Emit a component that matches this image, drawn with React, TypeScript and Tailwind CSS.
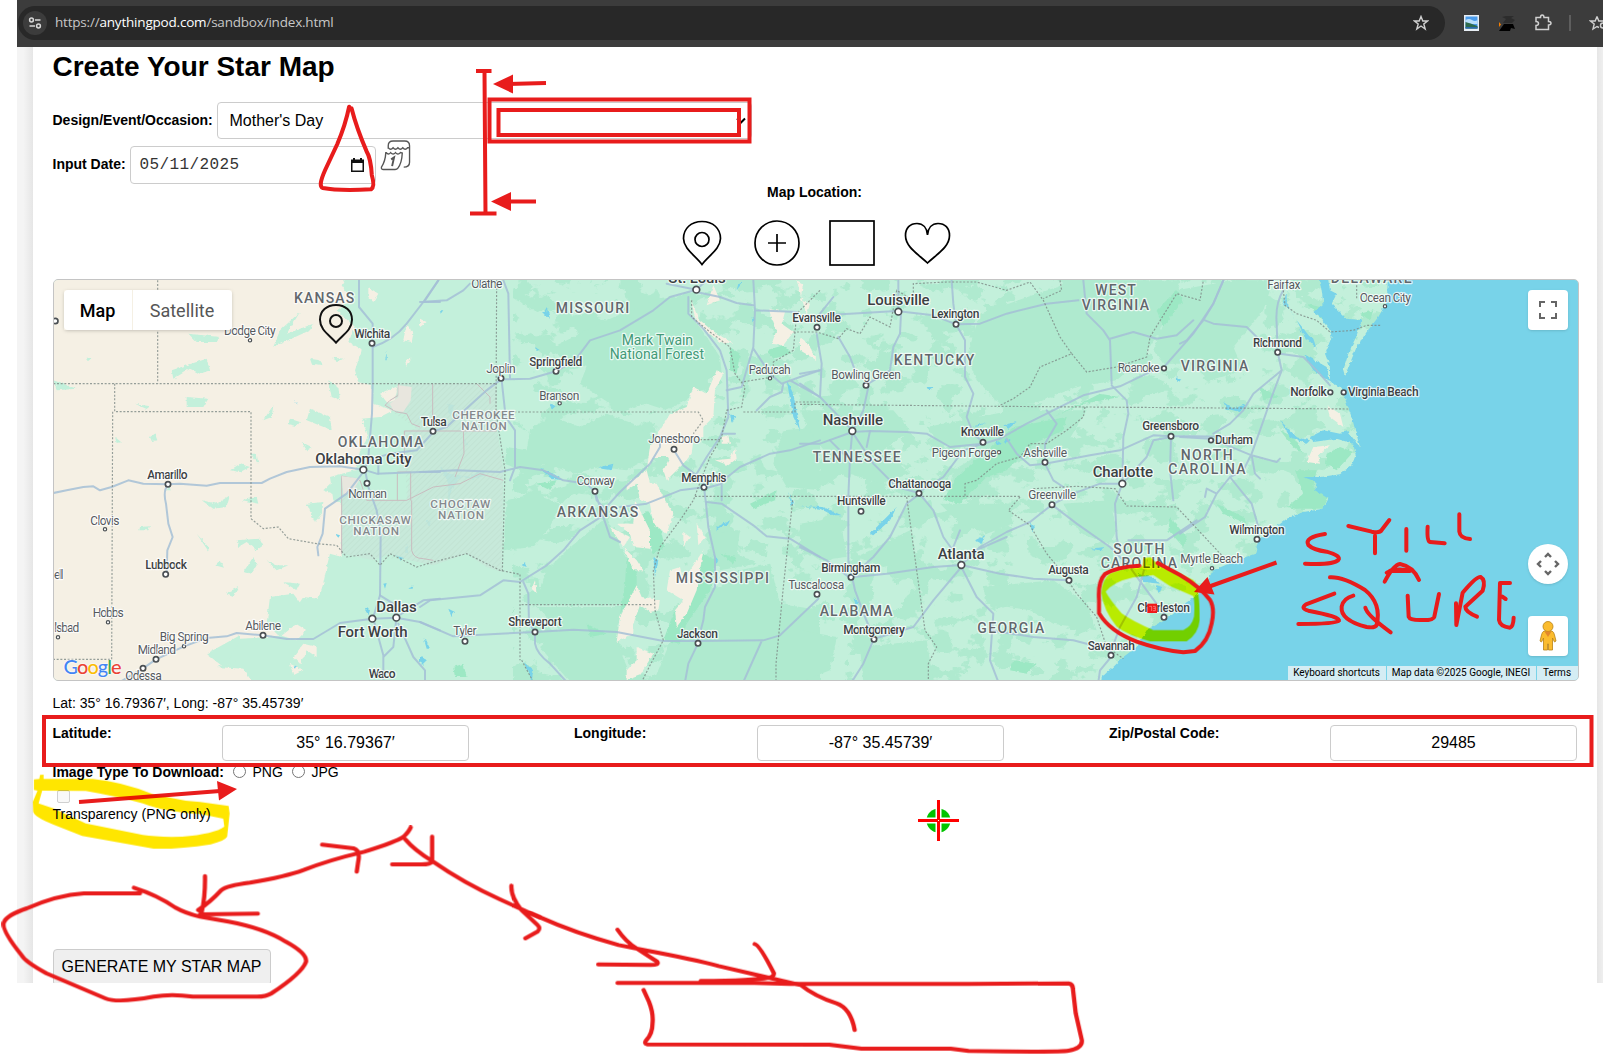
import React from "react";

type Kind = "state" | "nation" | "metro" | "city" | "town" | "park";
type Label = [string, number, number, number, Kind];

const labelStyle: Record<Kind, { size: number; weight: number; fill: string }> = {
  state: { size: 42, weight: 500, fill: "#62676c" },
  nation: { size: 35, weight: 500, fill: "#85898d" },
  metro: { size: 45, weight: 500, fill: "#3c4043" },
  city: { size: 36, weight: 500, fill: "#3c4043" },
  town: { size: 36, weight: 400, fill: "#55595e" },
  park: { size: 42, weight: 400, fill: "#439a78" },
};

type Sheet = { x: number; labels: Label[]; dots: [number, number, number][] };

const sheets: Sheet[] = [
  {
    x: 0,
    labels: [
      ["KANSAS", 762, 943, 97, "state"],
      ["Dodge City", 552, 707, 195, "town"],
      ["Wichita", 943, 1051, 204, "city"],
      ["OKLAHOMA", 893, 1150, 531, "state"],
      ["Oklahoma City", 826, 1115, 580, "metro"],
      ["Amarillo", 322, 443, 627, "city"],
      ["Norman", 925, 1041, 682, "town"],
      ["CHICKASAW", 898, 1112, 762, "nation"],
      ["NATION", 940, 1077, 795, "nation"],
      ["Clovis", 151, 238, 763, "town"],
      ["Lubbock", 316, 441, 897, "city"],
      ["ell", 42, 70, 927, "town"],
      ["Hobbs", 158, 251, 1041, "town"],
      ["lsbad", 43, 118, 1086, "town"],
      ["Dallas", 1009, 1130, 1024, "metro"],
      ["Fort Worth", 893, 1103, 1100, "metro"],
      ["Abilene", 616, 723, 1080, "town"],
      ["Big Spring", 359, 506, 1113, "town"],
      ["Midland", 293, 408, 1152, "town"],
      ["Odessa", 256, 365, 1230, "town"],
      ["Waco", 986, 1067, 1223, "city"],
    ],
    dots: [
      [46, 152, 8], [630, 210, 5], [996, 219, 8], [970, 598, 10], [981, 639, 8], [384, 642, 8],
      [195, 777, 5], [377, 912, 8], [204, 1056, 5], [54, 1101, 5], [997, 1045, 10], [1069, 1042, 10],
      [669, 1095, 8], [432, 1128, 5], [348, 1167, 8], [309, 1194, 8],
    ],
  },
  {
    x: 1140,
    labels: [
      ["Olathe", 154, 247, 54, "town"],
      ["MISSOURI", 407, 628, 129, "state"],
      ["St. Louis", 745, 917, 37, "metro"],
      ["Mark Twain", 605, 819, 225, "park"],
      ["National Forest", 569, 852, 267, "park"],
      ["Springfield", 328, 487, 288, "city"],
      ["Joplin", 199, 287, 309, "town"],
      ["Branson", 358, 478, 388, "town"],
      ["Tulsa", 2, 80, 468, "city"],
      ["CHEROKEE", 97, 284, 447, "nation"],
      ["NATION", 124, 260, 480, "nation"],
      ["Jonesboro", 685, 840, 519, "town"],
      ["Conway", 470, 584, 645, "town"],
      ["Memphis", 784, 919, 636, "city"],
      ["CHOCTAW", 31, 211, 713, "nation"],
      ["NATION", 54, 192, 747, "nation"],
      ["ARKANSAS", 410, 655, 741, "state"],
      ["MISSISSIPPI", 767, 1047, 939, "state"],
      ["Shreveport", 265, 425, 1068, "city"],
      ["Tyler", 100, 170, 1095, "town"],
      ["Jackson", 771, 894, 1104, "city"],
      ["Paducah", 986, 1112, 312, "town"],
    ],
    dots: [
      [829, 58, 10], [408, 303, 8], [243, 324, 8], [419, 399, 5], [39, 483, 8], [762, 537, 8],
      [525, 663, 8], [852, 651, 8], [345, 1085, 8], [135, 1113, 8], [834, 1119, 8], [1050, 324, 5],
    ],
  },
  {
    x: 2280,
    labels: [
      ["Evansville", -23, 123, 156, "city"],
      ["Tuscaloosa", -35, 133, 957, "town"],
      ["Louisville", 202, 389, 103, "metro"],
      ["Lexington", 394, 538, 144, "city"],
      ["WEST", 886, 1007, 75, "state"],
      ["VIRGINIA", 845, 1047, 118, "state"],
      ["KENTUCKY", 281, 523, 285, "state"],
      ["Bowling Green", 94, 303, 327, "town"],
      ["Roanoke", 953, 1079, 306, "town"],
      ["Nashville", 68, 249, 463, "metro"],
      ["Knoxville", 482, 612, 498, "city"],
      ["TENNESSEE", 38, 302, 576, "state"],
      ["Pigeon Forge", 395, 590, 559, "town"],
      ["Asheville", 670, 801, 561, "town"],
      ["Greensboro", 1027, 1197, 480, "city"],
      ["Charlotte", 878, 1059, 619, "metro"],
      ["Chattanooga", 265, 454, 654, "city"],
      ["Huntsville", 111, 257, 705, "city"],
      ["Greenville", 685, 828, 687, "town"],
      ["SOUTH", 940, 1093, 852, "state"],
      ["CAROLINA", 902, 1131, 894, "state"],
      ["Atlanta", 413, 554, 865, "metro"],
      ["Birmingham", 64, 241, 906, "city"],
      ["Augusta", 745, 866, 912, "city"],
      ["ALABAMA", 59, 278, 1038, "state"],
      ["Montgomery", 130, 315, 1092, "city"],
      ["GEORGIA", 532, 733, 1087, "state"],
      ["Charleston", 1012, 1170, 1026, "city"],
      ["Savannah", 863, 1005, 1140, "city"],
    ],
    dots: [
      [51, 171, 8], [51, 972, 8], [295, 124, 10], [468, 162, 8], [198, 345, 8], [1092, 294, 7],
      [157, 482, 10], [549, 516, 8], [597, 546, 5], [735, 576, 8], [1113, 498, 8], [967, 640, 10],
      [357, 669, 8], [183, 723, 8], [756, 703, 8], [484, 884, 10], [153, 921, 8], [807, 930, 8],
      [222, 1107, 8], [1092, 1041, 8], [933, 1155, 8],
    ],
  },
  {
    x: 3420,
    labels: [
      ["Fairfax", 262, 361, 57, "town"],
      ["DELAWARE", 452, 695, 37, "state"],
      ["Ocean City", 539, 693, 96, "town"],
      ["VIRGINIA", 2, 205, 303, "state"],
      ["Richmond", 219, 366, 231, "city"],
      ["Norfolk", 331, 440, 378, "city"],
      ["Virginia Beach", 504, 716, 378, "city"],
      ["Durham", 105, 219, 522, "city"],
      ["NORTH", 2, 158, 570, "state"],
      ["CAROLINA", -35, 197, 612, "state"],
      ["Wilmington", 148, 314, 792, "city"],
      ["Myrtle Beach", 1, 189, 879, "town"],
    ],
    dots: [
      [615, 108, 5], [293, 246, 8], [451, 366, 7], [491, 366, 7], [93, 510, 7], [231, 807, 8], [96, 894, 5],
    ],
  },
];

function Terrain() {
  return (
    <g filter="url(#rough)">
      <rect x="0" y="0" width="4700" height="1300" fill="#c3f0db" />
      <rect x="1420" y="0" width="2900" height="1300" filter="url(#patches)" />
      {/* forests */}
      <g fill="#afeacf">
        <g transform="translate(1140 0)">
          <path d="M380,240 L480,190 560,150 700,90 820,70 810,130 860,200 900,260 905,310 830,340 800,390 740,420 680,400 600,420 540,380 480,340 500,290Z" />
          <path d="M330,480 L400,440 480,470 560,430 640,460 700,500 690,560 620,600 540,590 460,610 380,580 300,600 255,580 260,530 320,540Z" />
          <path d="M260,690 L340,670 420,700 390,770 340,830 250,840Z M440,840 L560,740 600,830 640,900 650,960 600,1003 350,1003 360,960 380,900Z" />
          <path d="M350,1010 L620,1010 590,1070 600,1140 640,1235 450,1235 360,1130 420,1080Z" />
          <path d="M740,1140 L830,960 900,950 960,900 1050,880 1080,1000 1200,1020 1200,1235 700,1235Z" />
          <path d="M1090,480 L1200,470 1200,660 1100,650 1060,580Z M880,790 L960,780 950,850 1010,880 900,900Z" />
        </g>
        <g transform="translate(2280 0)">
          <path d="M540,130 L740,60 850,30 1140,30 1080,180 1030,260 950,330 830,350 700,400 600,400 530,330 500,260Z" />
          <path d="M0,420 L280,420 330,480 250,540 330,610 240,640 120,600 40,500Z M380,470 L640,420 860,420 800,520 700,560 600,590 540,680 440,690 460,600 560,540 420,520Z" />
          <path d="M420,700 L620,700 640,760 560,790 480,760Z M790,700 L930,690 950,780 930,820 840,790Z" />
          <path d="M550,950 L760,930 860,1000 890,1080 760,1060 690,1020 560,1000Z M0,760 L120,740 140,860 60,870 0,830Z M170,860 L330,780 350,870 250,890Z" />
          <path d="M180,1130 L380,1110 400,1235 190,1235Z M0,1080 L110,1100 90,1200 0,1235Z" />
          <path d="M1130,60 L1300,30 1420,30 1390,120 1300,230 1330,300 1230,330 1170,280 1090,280 1060,240Z" />
        </g>
      </g>
      <g fill="#9ce8c4">
        <path transform="translate(2280 0)" d="M430,690 L470,620 560,540 640,470 800,440 790,480 700,520 620,600 560,620 480,700Z M640,1170 L710,1180 740,1150 680,1210 630,1200Z M1110,740 L1160,800 1150,830 1105,780Z M900,370 L960,380 850,400 760,440Z M1070,120 L1130,60 1150,90 1090,170Z" />
        <path transform="translate(1140 0)" d="M680,720 L720,770 735,830 700,850 660,740Z M620,860 L650,910 650,960 600,1030 615,940Z M830,890 L850,850 890,870 870,960 800,1060 780,1120 730,1110 760,1030 820,970Z M930,230 L960,250 950,310 930,300Z M1040,240 L1090,225 1115,250 1060,265Z M350,640 L410,630 390,660Z M100,1190 L130,1180 140,1220 105,1220Z M990,700 L1070,660 1065,690 1000,715Z M900,850 L950,860 940,880Z M500,1060 L560,1090 510,1100Z" />
        <path transform="translate(3420 0)" d="M345,600 L410,600 400,650 445,680 430,715 350,715 320,710 370,670Z M440,550 L480,530 520,545 470,600 435,580Z M300,480 L340,500 370,550 340,530Z M110,700 L190,740 200,760 130,730Z M240,350 L300,380 250,390Z M380,100 L420,110 430,150Z M540,130 L580,120 570,150Z" />
      </g>
      {/* western plains */}
      <path
        fill="#f5f0e4"
        d="M0,0 L930,0 905,45 935,90 890,120 945,170 925,215 965,240 945,300 955,335 995,345 1000,400 1060,420 1020,440 965,445 985,500 960,540 945,600 900,612 870,620 880,690 905,700 905,860 870,850 860,890 850,940 835,985 790,980 770,1010 750,1050 800,1080 770,1110 720,1095 690,1100 600,1105 560,1120 505,1155 570,1180 530,1190 610,1195 640,1240 0,1240Z"
      />
      <g fill="#f5f0e4">
        <path d="M985,50 L1015,70 1000,95 985,80Z M1100,160 L1120,190 1115,215 1090,210Z M1095,270 L1112,265 1100,290Z M760,1160 L790,1120 830,1130 830,1160 800,1140 780,1180Z M750,1180 L790,1200 760,1215Z M1020,370 L1080,345 1115,350 1110,410 1060,420Z" />
        <g transform="translate(1140 0)">
          <path d="M890,300 L910,310 885,360 880,440 850,470 850,500 820,510 815,550 790,580 740,630 730,600 750,560 700,560 680,600 690,640 710,640 735,690 760,730 740,790 700,760 690,700 660,690 650,640 620,660 620,640 680,600 690,530 750,430 800,410 820,350 860,370Z" />
          <path d="M645,690 L690,780 690,835 640,830 630,790 590,760 640,760Z M570,770 L630,800 610,830 650,870 670,900 640,900 610,830Z M830,760 L855,800 835,825Z M790,785 L810,800 790,830Z M850,840 L830,960 800,1030 770,1070 765,1020 790,990 740,960 750,900 780,890 790,930Z" />
          <path d="M650,945 L665,980 720,990 715,1020 690,1025 660,1005 640,1060 640,1090 590,1115 600,1040Z M650,1100 L650,1130 700,1150 660,1215 620,1230 620,1200 650,1170Z M880,45 L900,90 860,105Z M810,80 L835,145 875,180 940,220 900,215 830,160Z M1045,115 L1095,125 1085,160 1120,185 1090,225 1055,220 1070,180Z M1140,200 L1165,220 1190,270 1140,240Z M905,500 L925,495 930,520 905,520Z M945,530 L950,565 925,585 885,570 930,565Z M345,930 L350,970 335,955Z M0,145 L20,155 0,170Z M1130,30 L1150,40 1140,90 1170,100 1160,135Z" />
        </g>
        <path transform="translate(3420 0)" d="M440,405 L480,430 490,470 450,440Z M400,530 L450,525 415,555 420,580 380,575Z" />
      </g>
      <g fill="#c3f0db">
        <path d="M395,300 L440,285 500,265 510,300 480,310 450,295 400,325Z M440,380 L505,385 490,410 440,410Z M285,400 L330,408 320,416Z M700,405 L695,440 670,450Z M445,190 L540,200 530,215 470,215Z M720,180 L780,125 740,190 820,160 810,180 700,230Z M225,500 L243,515 230,518Z M330,500 L345,490 352,510 335,512Z M750,445 L780,455 770,468 745,462Z M810,415 L870,440 875,480 800,450Z M785,515 L815,530 800,540Z M570,600 L600,580 630,590 600,605Z M630,550 L650,550 655,580Z M485,690 L530,700 570,675 560,710 520,715Z M605,690 L650,680 655,700Z M300,770 L330,768 325,780 298,780Z M470,790 L505,830 505,842Z M590,810 L660,805 670,825 650,840 620,815 595,830Z M525,885 L540,870 552,892Z M610,905 L640,860 650,885 635,910Z M680,870 L710,885 745,885 710,900Z M555,970 L595,950 580,980Z M800,700 L850,695 845,730 825,755Z M870,640 L930,620 900,680 850,660Z M690,980 L760,970 790,1010 770,1060 720,1100 680,1060Z M730,935 L780,940 770,960Z M500,1150 L600,1095 600,1110 570,1160 590,1170 550,1190Z M40,330 L110,355 50,360Z M865,330 L895,350 900,390 875,380Z M810,265 L840,270 850,285 815,280Z M875,262 L915,265 890,272Z M140,262 L155,262 145,272Z M380,660 L390,640 395,660Z" />
      </g>
      <g fill="#78d3e9">
        <path
          transform="translate(3420 0)"
          d="M1300,0 L625,0 620,95 595,140 560,185 530,230 505,290 495,318 490,300 505,250 530,195 545,150 500,145 455,100 470,70 450,60 440,0 410,0 425,60 430,100 400,125 440,150 455,200 435,250 450,290 450,335 485,352 500,400 515,440 540,530 500,480 480,490 430,480 390,500 400,515 470,505 520,520 527,555 515,585 480,612 420,620 370,620 410,635 405,660 445,685 430,715 370,725 320,745 270,785 235,810 225,850 170,870 100,900 75,940 50,975 0,1010 -45,1050 -100,1080 -130,1130 -170,1160 -200,1190 -235,1220 -235,1300 1300,1300Z"
        />
        <path transform="translate(3420 0)" d="M320,60 L310,105 330,115 345,150 320,95Z M355,175 L400,205 410,235Z M370,250 L440,290 450,335 400,300Z M130,395 L160,415 200,400 180,425 140,415Z M300,450 L350,500 390,510 380,520 330,500Z M415,115 L450,150 460,190 430,155Z M350,150 L390,200 380,210Z" />
        <path transform="translate(1140 0)" d="M60,590 L90,610 150,620 180,600 200,615 160,625 120,620 95,660 85,690 85,640Z M85,400 L102,405 95,430 85,425Z M360,595 L400,610 430,630 395,625Z M540,590 L580,580 575,600 545,595Z M390,400 L410,405 395,418Z M380,110 L390,145 370,130Z M345,230 L360,240 350,242Z M1100,330 L1120,370 1140,480 1120,440Z M1105,665 L1120,700 1115,710Z M890,770 L930,750 925,760 890,780Z M305,885 L315,875 320,890Z M180,560 L170,575Z M85,1015 L105,1025 95,1040Z M10,1100 L30,1135 20,1135Z M310,1175 L340,1200 335,1235 325,1200Z M0,1160 L20,1170 0,1175Z M135,505 L142,520 138,530Z M60,120 L70,120 62,130Z M995,140 L1005,145 998,158Z M700,860 L715,870 705,920Z M880,850 L895,870 890,880Z M955,40 L968,35 950,60Z M930,430 L945,440 935,460Z" />
        <path transform="translate(2280 0)" d="M0,708 L70,710 125,735 100,735 60,715Z M210,790 L290,710 270,750 220,795Z M525,810 L555,795 545,820Z M610,465 L650,455 625,475Z M610,505 L632,510 615,520Z M690,755 L705,770 695,785Z M590,510 L605,520 590,525Z M1130,320 L1142,330 1132,335Z M1070,945 L1087,950 1075,968Z M1010,910 L1060,920 1080,940 1030,935Z M870,835 L915,830 900,840Z M515,470 L560,455 530,470Z M380,350 L400,350 385,360Z M160,980 L175,1000 170,1020Z" />
        <path d="M760,385 L775,405 770,400Z M1100,815 L1105,850 1095,845Z M1065,855 L1090,860 1085,870Z M1030,940 L1040,938 1035,955Z M970,1010 L990,1020 985,1035Z M1155,1105 L1170,1135 1160,1125Z M1145,1160 L1160,1170 1145,1185Z M760,1190 L770,1185 765,1195Z M975,700 L990,705Z M885,790 L900,795 895,802Z M720,888 L740,885Z M1125,465 L1140,470Z M1160,750 L1172,755 1165,768Z M920,200 L935,205Z M1040,240 L1040,270 1036,270Z M1105,955 L1120,945 1118,955Z" />
      </g>
    </g>
  );
}

function Reservations() {
  return (
    <g stroke="#c9bcbf" strokeWidth="3">
      <path stroke="none" d="M1075,340 L1370,340 1372,480 1390,600 1385,905 1340,890 1280,850 1180,885 1110,870 1050,850 1000,870 905,850 905,617 945,620 980,690 1100,690 1110,610 1070,600 1095,580 1093,482 1130,475 1100,430 1050,420 1035,400 1065,390Z" fill="#c8e7d9" fillOpacity=".85" />
      <path stroke="none" d="M1075,340 L1370,340 1372,480 1390,600 1385,905 1340,890 1280,850 1180,885 1110,870 905,850 905,617 980,690 1100,690 1093,482 1130,475 1050,420Z" fill="url(#hatch)" />
      <path fill="none" d="M1075,340 V375 L1050,390 1035,405 1070,425 1100,430 1115,460 1140,470 M1093,482 H1370 M1093,482 V580 M905,850 V617 L960,630 980,690 1100,690 M1178,340 V480 M1115,690 V840 Q1120,865 1150,865 L1180,870 M1100,690 L1180,650 1260,640 1320,610 1390,630 M1270,480 L1272,550 1245,620 M1072,610 V690 M1072,605 H1112 V690 M1310,340 L1350,380 1350,400" />
      <path fill="#e8e6de" stroke="none" d="M1075,345 L1115,350 1112,390 1090,425 1060,420 1050,400 1075,380Z M905,617 L960,625 940,660 910,675Z" />
    </g>
  );
}

function Roads() {
  return (
    <g fill="none" stroke="#a4bfd6" strokeOpacity=".85" strokeWidth="6" strokeLinejoin="round" strokeLinecap="round">
      <g>
        <path d="M40,668 L80,660 130,650 160,648 180,660 215,650 265,630 310,640 384,642 420,640 500,646 540,638 665,638 690,625 740,605 810,590 900,588 970,598 1010,610 1140,605 1200,605" />
        <path d="M384,645 Q368,660 378,700 L385,760 398,800 382,840 380,905" />
        <path d="M957,30 V110 L998,160 V340 L996,430 985,560 975,598 985,650 1010,720 1022,800 1020,975 1000,1040" />
        <path d="M998,230 Q1060,210 1100,160 L1150,95 1195,30 M1150,95 H1200" />
        <path d="M970,605 L920,670 855,715 848,790 832,830 835,855 M985,570 L1050,550 1130,540 1180,485 M1015,610 V570" />
        <path d="M240,1235 L309,1194 348,1167 432,1128 500,1103 560,1098 590,1088 669,1095 740,1106 820,1106 900,1058 997,1045 1069,1042 1140,1055 1200,1080 M1000,1045 L1030,1155 V1235 M1069,1045 L1060,1130 1030,1160 M1075,1060 L1120,1160 1155,1200 1155,1235 M1020,975 L1060,1000 1069,1040 M1069,1040 L1150,990 1200,985" />
      </g>
      <g transform="translate(1140 0)">
        <path d="M0,95 L80,90 130,60 150,40 M12,95 L55,30 M250,30 L265,70 270,325 M39,483 L80,470 150,405 200,360 243,327 330,325 408,303 465,270 510,210 600,180 700,120 750,80 829,58 M829,58 L740,40 M829,58 L860,30 M829,65 L900,80 950,98 1000,105 M805,80 V130 L850,175 900,240 920,300 925,440 900,500 860,560 830,610 852,645" />
        <path d="M245,330 L257,440 285,480 285,590 270,630 M0,605 L110,600 240,605 300,590 370,600 430,630 500,640 525,665 530,690 550,710 M525,665 L550,740 570,800 600,815 M550,720 L600,665 690,580 720,530 720,500 M550,735 L480,780 430,840 380,885 300,935 250,930 180,975 30,990 0,1010" />
        <path d="M310,935 L325,970 327,1060 345,1085 M0,1055 L100,1098 240,1090 345,1085 460,1078 590,1085 730,1112 834,1112 1030,1110 1080,1095 1195,985 M345,1090 V1120 Q350,1150 390,1180 L440,1235 M834,1119 L805,1180 795,1235 M1025,1112 L990,1190 970,1235 M834,1112 L850,1050 855,1010 885,950 885,860 865,770 858,700 852,650" />
        <path d="M860,695 L905,700 1000,765 1040,798 1110,805 1200,860 M600,710 L680,700 780,660 852,651 M852,655 L905,640 905,690 M762,540 L790,585 830,615 M910,630 L960,590 1050,550 1110,540 1200,510 M920,360 L965,350 1000,230 1005,120 1000,30 M1005,120 L1130,125 M1000,235 L1050,310 1085,340 1140,320 1200,300 M1010,420 L1050,380 1085,365 1090,340 M1110,330 L1200,380 M905,490 H945" />
      </g>
      <g transform="translate(2280 0)">
        <path d="M0,520 L60,520 157,485 210,482 320,485 380,490 450,530 549,520 600,505 680,460 740,430 850,375 960,348 1060,300 1092,290 1180,190 1240,100 1270,30" />
        <path d="M157,482 L150,560 145,680 145,870 165,960 195,1040 222,1105 190,1180 155,1235 M157,485 L190,420 205,350 M205,340 L270,300 280,230 300,190 303,130 M0,340 L60,380 157,480 M60,380 L65,280 50,190 M0,310 L60,300 M115,200 L150,260 165,300 M60,135 L150,130 290,122 400,135 468,162 540,160 620,130 740,100 835,90 M468,162 L495,210 495,320 520,370 500,440 520,490 549,516 M295,120 V30 M455,30 L460,100 468,160 M100,80 L60,130" />
        <path d="M160,490 L220,580 290,650 357,668 400,720 430,800 480,870 M357,672 L320,700 270,800 220,860 153,920 M357,665 L430,620 490,540 549,520 M620,505 L650,550 690,585 735,580 870,555 960,540 1060,495 1113,498 1180,498 1300,500" />
        <path d="M735,580 L760,630 790,650 M0,830 L80,870 153,925 M153,921 L260,910 400,890 484,884 600,910 700,925 807,930 M484,890 L400,990 340,1070 222,1105 M484,890 L530,980 580,1030 570,1170 595,1235 M484,884 L540,830 620,785 690,755 756,703 820,670 900,640 967,640 M756,703 L830,760 930,830 970,870 M967,640 L945,700 950,800 960,850" />
        <path d="M850,30 L860,130 910,180 930,210 935,340 M935,345 L980,390 985,430 970,500 967,640 M930,205 L1000,185 1070,205 1130,195 1180,150 M967,640 L1040,560 1060,510 1113,500 1110,600 1120,690 M740,420 L770,460 735,520 735,570 M570,1080 L700,1100 820,1110 933,1140 M985,810 L1100,810 1190,750 M975,870 L1040,960 1092,1030 M930,1150 L960,1070 1010,980 1040,870 M90,510 L140,560 M210,482 L200,530 M933,1160 L900,1200 895,1235 M480,780 L460,830 M540,835 L620,800" />
      </g>
      <g transform="translate(3420 0)">
        <path d="M310,60 Q285,100 290,160 L293,246 305,300 275,380 240,480 215,550 190,600 150,620 110,670 75,740 0,790 M75,150 L100,160 200,170 230,200 M130,30 L100,100 70,150 20,210 0,220 M300,250 L370,260 410,300 450,345 M305,300 L220,370 190,420 150,460 100,490 M0,500 L93,505 215,555 290,575 300,565 M215,555 L225,610 240,625 M150,620 L190,670 215,700 235,770 235,800 M110,670 L80,655 75,680" />
      </g>
    </g>
  );
}

function Borders() {
  return (
    <g fill="none" stroke="#7d8a86" strokeOpacity=".8" strokeWidth="3.5" strokeDasharray="6 5">
      <path d="M353,30 V340 M40,340 H1370 M224,340 V424 H633 V745 L670,775 715,770 745,805 830,820 890,825 920,860 990,850 1020,885 1050,850 1130,890 1180,875 1280,850 1380,900 1440,912 V1170 M218,424 L215,1167 H40" />
      <g transform="translate(1140 0)">
        <path d="M230,30 L228,425 255,600 247,905 M228,425 H835 L850,450 820,490 M840,508 H900 M305,1003 H695 M305,1170 L340,1235 M815,90 V140 L870,185 930,230 945,310 975,350 965,410 920,420 905,500 870,560 850,610 820,690 780,750 720,830 700,900 705,1020 730,1110 690,1185 665,1235 M970,425 H1125 V395 H1200 M825,678 H1800 M1118,690 L1090,950 1068,1180 V1235 M1200,60 L1130,130 1120,240 1060,275 1060,320 965,335" />
      </g>
      <g transform="translate(2280 0)">
        <path d="M-20,185 H50 L115,205 140,175 180,190 210,140 270,170 290,60 340,90 340,40 440,35 530,35 620,60 690,35 730,90 780,200 815,250 720,290 690,350 640,385 600,405 M0,402 L600,408 1650,416 M815,250 L860,305 950,290 1040,260 1050,200 1130,70 1200,90 1210,30 M855,410 L850,440 800,480 740,520 690,520 660,560 590,580 530,630 495,640 495,678 M320,680 L350,900 375,1080 410,1130 385,1180 385,1235 M660,680 L625,720 690,765 740,850 790,910 830,970 890,1040 920,1130 970,1165 M700,655 L830,648 945,655 980,707 1130,710 1270,860 M780,30 L785,60 730,85" />
      </g>
      <path transform="translate(3420 0)" d="M310,60 L315,105 350,130 410,150 450,185 520,180 560,165 H605 M530,45 V85" />
    </g>
  );
}

function MapLabels() {
  return (
    <>
      {sheets.map((s) => (
        <g key={s.x} transform={`translate(${s.x} 0)`}>
          {s.dots.map(([x, y, r], i) => (
            <circle key={i} cx={x} cy={y} r={r} fill="#fff" stroke="#4b5054" strokeWidth={r > 6 ? 5 : 3.5} />
          ))}
          {s.labels.map(([t, x1, x2, y, k], i) => (
            <text
              key={i}
              x={x1}
              y={y}
              textLength={x2 - x1}
              fontSize={labelStyle[k].size}
              fontWeight={labelStyle[k].weight}
              fill={labelStyle[k].fill}
              stroke="#fff"
              strokeOpacity=".75"
              strokeWidth="7"
              strokeLinejoin="round"
              paintOrder="stroke"
            >
              {t}
            </text>
          ))}
        </g>
      ))}
    </>
  );
}

function MapDrawing() {
  return (
    <svg className="absolute inset-0 h-full w-full font-['Roboto']" viewBox="42 29 4572 1200" preserveAspectRatio="none">
      <defs>
        <filter id="rough" x="0" y="0" width="100%" height="100%">
          <feTurbulence type="fractalNoise" baseFrequency="0.09" numOctaves="2" seed="4" />
          <feDisplacementMap in="SourceGraphic" scale="10" xChannelSelector="R" yChannelSelector="G" />
        </filter>
        <filter id="patches" x="0" y="0" width="100%" height="100%" colorInterpolationFilters="sRGB">
          <feTurbulence type="fractalNoise" baseFrequency="0.012 0.016" numOctaves="4" seed="11" />
          <feColorMatrix values="0 0 0 0 .686  0 0 0 0 .918  0 0 0 0 .812  28 0 0 0 -15" />
        </filter>
        <pattern id="hatch" width="12" height="12" patternUnits="userSpaceOnUse" patternTransform="rotate(45)">
          <path d="M0,0 V12" stroke="#bdddce" strokeWidth="3" />
        </pattern>
      </defs>
      <Terrain />
      <Reservations />
      <Roads />
      <Borders />
      <MapLabels />
      <g transform="translate(888 0)" fill="none" stroke="#111">
        <path d="M0,217 C-18,195 -48,180 -48,148 C-48,122 -28,104 0,104 C28,104 48,122 48,148 C48,180 18,195 0,217Z" strokeWidth="6" />
        <circle cx="0" cy="152" r="18" strokeWidth="6" />
      </g>
      <g transform="translate(2280 0)">
        <rect x="1042" y="1000" width="29" height="28" fill="#f01818" />
        <path d="M1048,1008 H1055 V1022 M1059,1008 H1066 V1021 H1059 M1060,1014 H1066" fill="none" stroke="#ff9d9d" strokeWidth="2" />
      </g>
    </svg>
  );
}

function MapPanel() {
  return (
    <div className="relative h-[402px] w-[1526px] overflow-hidden rounded-[5px] border border-[#c4c4c4] bg-[#c3f0db] font-['Roboto']">
      <MapDrawing />
      <div className="absolute left-[10px] top-[10px] flex h-10 text-[18px] shadow-[0_1px_4px_-1px_rgba(0,0,0,0.3)]">
        <div className="flex w-[68px] items-center justify-center rounded-l-sm bg-white font-medium text-black">Map</div>
        <div className="ml-px flex w-[99px] items-center justify-center rounded-r-sm bg-white text-[#565656]">Satellite</div>
      </div>
      <div className="absolute bottom-[1px] left-[10px] h-[26px] font-['Lato'] text-[20px] font-medium leading-[26px] tracking-[-1px] [text-shadow:0_0_2px_white,0_0_2px_white]">
        <span className="text-[#4285f4]">G</span>
        <span className="text-[#ea4335]">o</span>
        <span className="text-[#fbbc04]">o</span>
        <span className="text-[#4285f4]">g</span>
        <span className="text-[#34a853]">l</span>
        <span className="text-[#ea4335]">e</span>
      </div>
      <div className="absolute right-[10px] top-[10px] flex size-10 items-center justify-center rounded-sm bg-white shadow">
        <svg className="size-[18px]" viewBox="0 0 18 18" fill="none" stroke="#666" strokeWidth="2">
          <path d="M1,6V1H6M12,1H17V6M17,12V17H12M6,17H1V12" />
        </svg>
      </div>
      <div className="absolute right-[10px] top-[264px] flex size-10 items-center justify-center rounded-full bg-white shadow">
        <svg className="size-6" viewBox="0 0 24 24" fill="none" stroke="#666" strokeWidth="2.400">
          <path d="M9,5L12,2L15,5M9,19L12,22L15,19M5,9L2,12L5,15M19,9L22,12L19,15" />
        </svg>
      </div>
      <div className="absolute right-[10px] top-[336px] flex size-10 items-center justify-center rounded-sm bg-white shadow">
        <svg className="h-8 w-5" viewBox="0 0 20 32" fill="#fbbc2e" stroke="#b78316" strokeWidth=".8">
          <path d="M6,11H14Q16,12 16.500,15L18,21L16.500,22L14.500,18V30H10.500V24H9.500V30H5.500V18L3.500,22L2,21L3.500,15Q4,12 6,11Z" />
          <circle cx="10" cy="6.500" r="5" />
          <path d="M6.500,11.500H13.500L10,17Z" fill="#e2872b" stroke="none" />
        </svg>
      </div>
      <div className="absolute bottom-0 right-0 flex h-[14px] items-center gap-px text-[10px] leading-[14px] text-black">
        <span className="w-[98px] bg-[#d4edf4] text-center">Keyboard shortcuts</span>
        <span className="w-[149px] bg-[#d4edf4] text-center">Map data ©2025 Google, INEGI</span>
        <span className="w-[41px] bg-[#d4edf4] text-center">Terms</span>
      </div>
    </div>
  );
}

function BrowserBar() {
  return (
    <div className="ml-[17px] flex h-[47px] items-start bg-[#3c3c3c] pt-[6px] text-[#c7c7c7]">
      <div className="ml-px flex h-[34px] w-[1427px] shrink-0 items-center rounded-full bg-[#282828] pl-[5px]">
        <div className="flex size-6 items-center justify-center rounded-full bg-[#3c3c3c]">
          <svg className="size-[14px]" viewBox="0 0 14 14" fill="none" stroke="#d8d8d8" strokeWidth="1.5">
            <circle cx="3.500" cy="4" r="1.900" />
            <path d="M7,4H12.500M1.500,10H7" />
            <circle cx="10.500" cy="10" r="1.900" />
          </svg>
        </div>
        <span className="ml-2 flex-1 whitespace-pre pb-px font-['Open_Sans'] text-[13.5px] tracking-[-0.2px]">
          https://<span className="text-white">anythingpod.com</span>/sandbox/index.html
        </span>
        <svg className="mr-4 size-4" viewBox="0 0 16 16" fill="none" stroke="#d0d0d0" strokeWidth="1.400">
          <path d="M8,1.500L9.800,6H14.500L10.800,9L12.200,14L8,11L3.800,14L5.200,9L1.500,6H6.200Z" />
        </svg>
      </div>
      <svg className="ml-[19px] mt-[9px] h-4 w-[15px] shrink-0" viewBox="0 0 15 16">
        <rect width="15" height="16" fill="#e8eef4" />
        <rect x="1.500" y="1.500" width="12" height="12" fill="#4b9cec" />
        <path d="M1.500,5Q5,3 8,5T13.500,5V9H1.500Z" fill="#b9defa" />
        <path d="M1.500,7Q6,8 13.500,11V13.500H1.500Z" fill="#2d6a4c" />
        <path d="M1.500,12H13.500V13.500H1.500Z" fill="#2a69ae" />
      </svg>
      <svg className="ml-5 mt-[9px] h-4 w-4 shrink-0" viewBox="0 0 16 16">
        <path d="M3,2L7,1L15,1L12,3L16,5L13,8H4L7,4Z" fill="#2c2c2c" />
        <path d="M0,16L5,9H14L16,14L12,13L11,16Z" fill="#000" />
        <path d="M0,7L2,9.500L0,12Z" fill="#f77f00" />
      </svg>
      <svg className="ml-[20px] mt-[8px] h-[17px] w-[17px] shrink-0" viewBox="0 0 17 17" fill="none" stroke="#d0d0d0" strokeWidth="1.500">
        <path d="M1,3.500H5.500Q5.500,1 7.200,1T9,3.500H13.500V7.500Q16,7.500 16,9.200T13.500,11V15.500H1V11.500Q3.500,11.500 3.500,9.500T1,7.500Z" />
      </svg>
      <div className="ml-[17px] mt-[9px] h-4 w-[2px] shrink-0 bg-[#5e5e5e]" />
      <svg className="ml-[18px] mt-[9px] h-4 w-[15px] shrink-0" viewBox="0 0 15 16" fill="none" stroke="#d0d0d0" strokeWidth="1.400">
        <path d="M8,1.500L9.800,6H14M8,1.500L6.200,6H1.500L5.200,9L4,14L8,11.500L10,12.500" />
        <circle cx="14" cy="10.500" r="2.500" />
      </svg>
    </div>
  );
}

function CoordField({ label, value, className }: { label: string; value: string; className: string }) {
  return (
    <div className={"flex shrink-0 items-start justify-between " + className}>
      <span className="text-[14px] font-bold leading-4">{label}</span>
      <div className="flex h-9 w-[247px] items-center justify-center rounded border border-[#ccc] text-[16px]">{value}</div>
    </div>
  );
}

function Annotations() {
  return (
    <svg className="pointer-events-none absolute left-0 top-0 h-[1055px] w-[1603px]" viewBox="0 0 1603 1055">
      <g fill="none" stroke="#e81c1c" strokeWidth="4">
        <path d="M476,71H491.500M484.500,71L485.500,215M470,213.500H496.500M505,84L546,83M500,201.500H536" />
        <rect x="489.500" y="99.500" width="260" height="42" />
        <rect x="498.500" y="110" width="240.500" height="25" />
        <rect x="44" y="717" width="1547.500" height="48" />
        <path d="M79,802L220,791" />
        <path d="M1276.500,562.500L1208,587" strokeWidth="4" />
      </g>
      <g fill="#e81c1c">
        <path d="M493,84L513,74.500V93.500ZM491,201.500L511,192V211ZM237,789L217,781L219,800.500ZM1194,592L1207.500,577L1214.500,594.500Z" />
      </g>
      <g className="mix-blend-multiply">
        <path
          transform="translate(0 680) scale(.35714 .33333)"
          fill="#ffe600"
          fillRule="evenodd"
          d="M95,298L110,297L112,285L122,284L122,297L260,297Q340,305 430,343L520,362L560,366L640,378L643,400L636,470Q630,482 590,493Q500,508 430,506L230,468L150,434Q95,410 93,395L92,365L105,332L95,330Z M118,332L240,333Q330,350 400,370Q460,395 560,402L625,416L628,440Q600,462 510,470Q440,472 400,465L240,430L150,385L108,370Z"
        />
        <path
          transform="translate(800 270) scale(.33333)"
          fill="#f2fa00"
          fillRule="evenodd"
          d="M1030,864L1052,862Q1070,885 1110,895L1180,930Q1200,950 1199,1050Q1196,1090 1160,1114L1050,1114Q980,1095 950,1070Q910,1020 904,970Q905,930 930,910Q975,890 1028,888Z M1060,915L1110,948L1180,978Q1185,1000 1182,1040Q1175,1070 1150,1080H1060Q1000,1055 965,1030Q930,990 917,965Q940,935 1000,922Z"
        />
      </g>
      <g fill="none" stroke="#e81c1c" strokeLinecap="round" strokeLinejoin="round" strokeWidth="12">
        <path
          transform="scale(.338 .3333)"
          d="M1033,320Q1022,375 998,432L962,510Q940,560 955,564Q1000,573 1098,568Q1110,560 1100,525Q1097,475 1085,455Q1055,385 1040,325"
        />
        <g transform="translate(800 270) scale(.33333)">
          <path d="M1018,887Q950,890 915,912Q893,935 897,990V1030Q930,1085 1010,1115Q1080,1140 1150,1147L1185,1143Q1225,1115 1235,1060Q1245,1015 1230,990Q1200,950 1140,915L1073,879" />
        </g>
        <g transform="translate(1180 270) scale(.33333)">
          <path d="M435,792Q372,802 385,825Q400,840 440,845Q485,858 475,870Q460,885 375,881" />
          <path d="M505,768L575,785Q600,790 605,780L628,750M585,797V850M679,777V842M743,770Q740,815 750,816L794,820M838,733V785Q840,805 870,807" />
          <path d="M614,935Q640,885 660,882Q700,890 717,930M620,908Q650,892 690,903L630,902" />
          <path d="M463,971L378,1003Q360,1015 385,1022Q480,1040 477,1052Q470,1062 355,1062" />
          <path d="M450,922Q490,920 555,960Q605,1000 590,1065Q585,1075 560,1071Q480,1050 485,1010Q490,985 520,977M556,1013Q560,1035 632,1087" />
          <path d="M683,977L686,1040Q690,1050 720,1050Q760,1052 763,1040L777,972" />
          <path d="M828,1000L829,1065L848,968Q890,918 902,921Q918,930 908,962L856,1010Q855,1025 891,1040" />
          <path d="M990,939H960L957,1050Q960,1070 990,1073Q1000,1070 1001,1043M967,980L977,987" />
        </g>
        <g transform="translate(0 680) scale(.35714 .33333)">
          <path d="M375,623Q440,645 490,682Q520,700 560,710L640,725Q740,745 800,785Q860,820 857,845Q845,880 760,940Q745,950 720,950H540Q480,940 430,950Q330,970 295,955L130,880Q70,845 60,825Q0,745 12,725Q20,705 75,685Q160,645 235,640H392" />
          <path d="M555,690Q590,665 620,630Q635,617 700,608Q800,590 850,570Q920,540 1020,515Q1110,485 1130,470Q1145,455 1150,442M574,588Q575,650 565,695L555,690M560,703L722,701M902,494L990,505Q1010,512 1003,545L999,575" />
          <path d="M1135,478Q1160,510 1210,543Q1300,610 1400,658L1480,697L1512,712M1210,470V545Q1205,553 1180,553H1098M1432,617Q1430,650 1460,690L1505,735Q1515,745 1505,755L1471,775" />
        </g>
        <g transform="translate(540 680) scale(.35714 .33333)">
          <path d="M0,712Q100,760 220,795L300,812Q430,838 500,858L640,893L730,915Q770,950 830,970Q870,985 881,1050M0,712L-30,698M217,749Q240,785 270,805L328,845Q335,855 310,855L163,853M601,792Q615,795 655,880Q655,890 640,893Q600,902 450,903" />
          <path d="M217,909H600L700,912H1200L1480,910Q1492,912 1492,925L1500,1000L1517,1080Q1520,1105 1480,1112Q1450,1117 1200,1113L1150,1106H900L810,1094L300,1093Q290,1090 298,1080Q315,1060 315,1030Q318,1000 305,965L290,930" />
        </g>
      </g>
      <g>
        <circle cx="938.500" cy="820.500" r="12" fill="#00c400" />
        <path d="M938.500,808V833M926,820.500H951" stroke="#fff" strokeWidth="6" />
        <path d="M938.500,800V841M918,820.500H959" stroke="#f00" strokeWidth="3" />
        <rect x="938" y="820" width="1" height="1" fill="#fff" />
      </g>
    </svg>
  );
}

function Markers() {
  return (
    <div className="flex h-[44px] items-center text-black">
      <svg className="ml-[629.5px] h-[46px] w-[40px]" viewBox="0 0 40 46" fill="none" stroke="#000" strokeWidth="1.700">
        <path d="M20,44.500C14,36 1.500,29 1.500,18.500C1.500,8.500 9,1.500 20,1.500S38.500,8.500 38.500,18.500C38.500,29 26,36 20,44.500Z" />
        <circle cx="20" cy="19.500" r="7" />
      </svg>
      <svg className="ml-[32px] size-[46px]" viewBox="0 0 46 46" fill="none" stroke="#000" strokeWidth="1.700">
        <circle cx="23" cy="23" r="22" />
        <path d="M23,14V32M14,23H32" />
      </svg>
      <svg className="ml-[29px] size-[46px]" viewBox="0 0 46 46" fill="none" stroke="#000" strokeWidth="1.700">
        <rect x="1" y="1" width="44" height="44" />
      </svg>
      <svg className="ml-[29px] h-[46px] w-[47px]" viewBox="0 0 47 46" fill="none" stroke="#000" strokeWidth="1.700">
        <path d="M23.500,15C23,8 19,3.500 13,3.500C6,3.500 1.500,8 1.500,15.500C1.500,27 14,34 23.500,43C33,34 45.500,27 45.500,15.500C45.500,8 41,3.500 34,3.500C28,3.500 24,8 23.500,15Z" />
      </svg>
    </div>
  );
}

export default function App() {
  return (
    <div className="relative h-[1055px] w-[1603px] overflow-hidden bg-white font-['Liberation_Sans',sans-serif] text-black">
      <BrowserBar />
      <div className="ml-[17px] flex h-[936px] overflow-hidden">
        <div className="w-4 shrink-0 bg-linear-to-r from-[#f4f4f4] from-40% to-[#e6e6e6]" />
        <div className="w-[1564px] shrink-0 bg-white pl-[19.5px]">
          <h1 className="pt-[4px] text-[28px] font-bold leading-8">Create Your Star Map</h1>
          <div className="mt-[19px] flex items-center">
            <span className="w-[164px] text-[14px] font-bold">Design/Event/Occasion:</span>
            <div className="flex h-[37px] w-[535px] items-center justify-between rounded border border-[#ccc] pl-3 pr-[5px] text-[16px]">
              Mother's Day
              <svg className="h-2 w-[10px]" viewBox="0 0 10 8" fill="none" stroke="#000" strokeWidth="2">
                <path d="M1,1.500L5,5.500L9,1.500" />
              </svg>
            </div>
          </div>
          <div className="mt-[7px] flex h-[38px] items-center">
            <span className="w-[77px] pb-[2px] text-[14px] font-bold">Input Date:</span>
            <div className="flex h-[38px] w-[246px] items-center justify-between rounded border border-[#ccc] pl-[9px] pr-[11px]">
              <span className="font-['Liberation_Mono',monospace] text-[16px] tracking-[0.4px] text-[#333]">05/11/2025</span>
              <svg className="h-[14px] w-[13px]" viewBox="0 0 13 14">
                <path d="M0,1.500H2V0H4V1.500H9V0H11V1.500H13V14H0ZM1.500,5V12.500H11.500V5Z" fill="#111" fillRule="evenodd" />
              </svg>
            </div>
            <svg className="mb-[20px] ml-[4px] h-[31px] w-[31px]" viewBox="0 0 31 32" fill="none" stroke="#555" strokeWidth="1.400">
              <path d="M8,9V6Q8,1 13,1H25Q30,1 30,6V23Q30,28 24,28M8,8Q10.500,11 13,8Q15.500,11 18,8Q20.500,11 23,8Q25.500,11 28,8L30,8" />
              <path d="M6,13Q8,16 10.500,13Q13,16 15.500,13Q18,16 20.500,13L22.500,13.500Q22,24 18,29Q17,30.500 15,30.500H3Q0.500,30.500 1,28Q5,22 5.500,13Z" />
              <path d="M11,20L14,18L12,27" strokeWidth="2" />
            </svg>
          </div>
          <div className="flex h-[16px] w-[1524px] justify-center text-[14px] font-bold leading-4">Map Location:</div>
          <div className="mt-[20.5px]">
            <Markers />
          </div>
          <div className="mt-[14.5px]">
            <MapPanel />
          </div>
          <div className="mt-[14px] text-[14px] leading-4">Lat: 35° 16.79367′, Long: -87° 35.45739′</div>
          <div className="mt-[14px] flex">
            <CoordField label="Latitude:" value="35° 16.79367′" className="w-[416.5px]" />
            <CoordField label="Longitude:" value="-87° 35.45739′" className="ml-[105px] w-[430px]" />
            <CoordField label="Zip/Postal Code:" value="29485" className="ml-[105px] w-[468px]" />
          </div>
          <div className="mt-[3px] flex h-4 items-center text-[14px] leading-4">
            <span className="w-[180px] font-bold">Image Type To Download:</span>
            <span className="mb-[2px] size-[13px] rounded-full border border-[#767676]" />
            <span className="ml-[7px] w-[39px]">PNG</span>
            <span className="mb-[2px] size-[13px] rounded-full border border-[#767676]" />
            <span className="ml-[7px]">JPG</span>
          </div>
          <div className="ml-1 mt-[10px] size-[13px] rounded-[2px] border border-[#d0d0d0] bg-[#f8f8f8]" />
          <div className="mt-[3px] text-[14px] leading-4">Transparency (PNG only)</div>
          <div className="mt-[127px] flex h-[37px] w-[218px] items-center justify-center rounded border border-[#ccc] bg-[#efefef] pb-px text-[16px]">
            GENERATE MY STAR MAP
          </div>
        </div>
        <div className="w-[6px] shrink-0 bg-linear-to-r from-[#e6e6e6] to-[#efefef]" />
      </div>
      <Annotations />
    </div>
  );
}
